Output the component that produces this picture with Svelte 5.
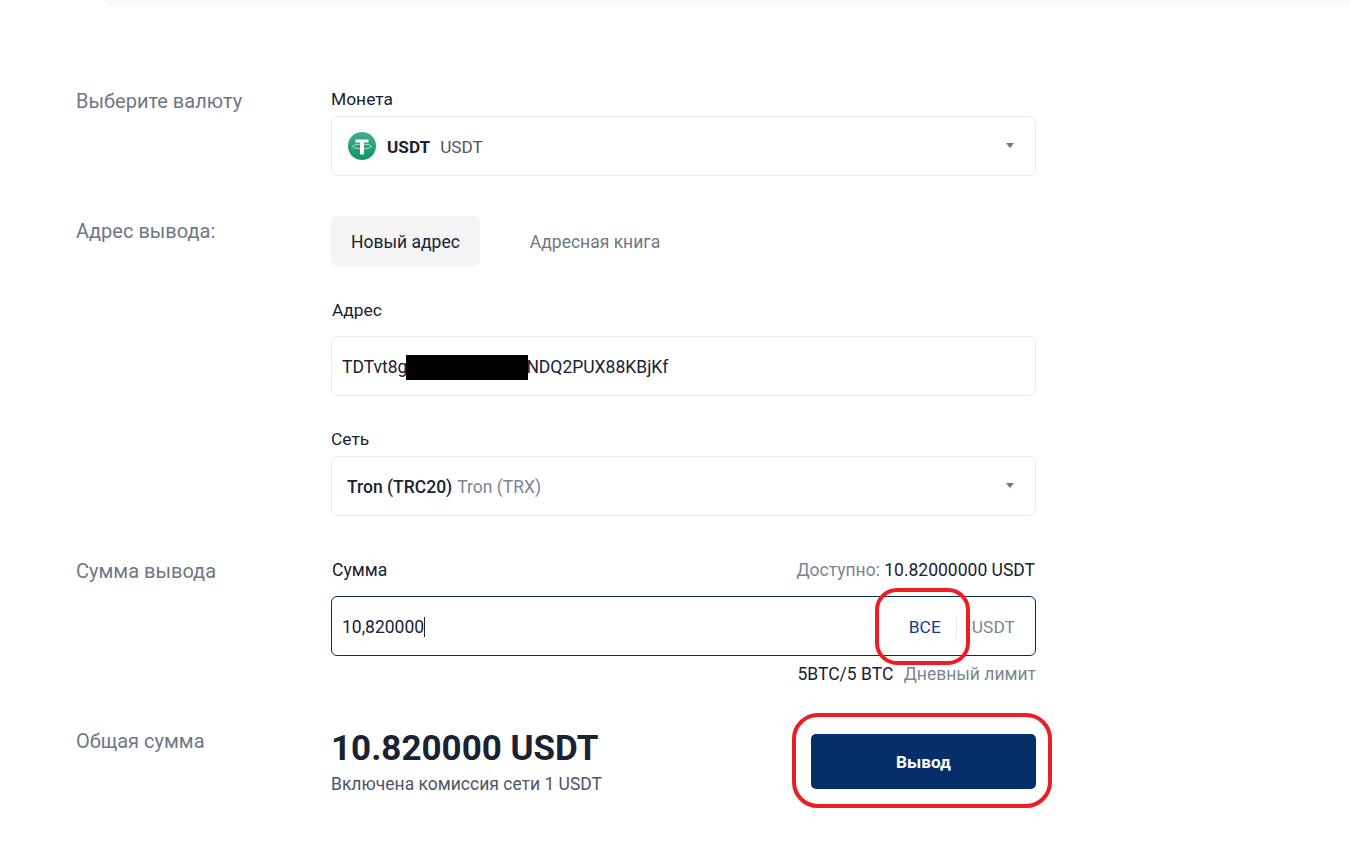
<script lang="ts">
  let amount = '10,820000';
</script>

<div class="top-strip"></div>

<main class="form">
  <div class="row first">
    <div class="row-title">Выберите валюту</div>
    <div class="row-body">
      <div class="field-label">Монета</div>
      <div class="select">
        <svg class="coin" viewBox="0 0 28 28" width="28" height="28" aria-hidden="true">
          <defs>
            <linearGradient id="tether" x1="0" y1="0" x2="0" y2="1">
              <stop offset="0" stop-color="#46ad90" />
              <stop offset="1" stop-color="#119466" />
            </linearGradient>
          </defs>
          <circle cx="14" cy="14" r="14" fill="url(#tether)" />
          <rect x="7.500" y="7.500" width="13" height="3" fill="#fff" />
          <rect x="12" y="10" width="4" height="12.500" fill="#fff" />
          <ellipse cx="14" cy="14.500" rx="9.500" ry="2.300" fill="none" stroke="#fff" stroke-opacity="0.8" stroke-width="0.8" />
        </svg>
        <span class="coin-name">USDT</span>
        <span class="coin-full">USDT</span>
        <span class="caret"></span>
      </div>
    </div>
  </div>

  <div class="row tabs-row">
    <div class="row-title">Адрес вывода:</div>
    <div class="row-body">
      <div class="tabs">
        <div class="tab active">Новый адрес</div>
        <div class="tab">Адресная книга</div>
      </div>
      <div class="field-label address-label">Адрес</div>
      <div class="input address">
        TDTvt8g<span class="redact-gap"></span>NDQ2PUX88KBjKf
        <span class="redact"></span>
      </div>
      <div class="field-label network-label">Сеть</div>
      <div class="select">
        <span class="net-name">Tron (TRC20)</span>
        <span class="net-full">Tron (TRX)</span>
        <span class="caret"></span>
      </div>
    </div>
  </div>

  <div class="row amount-row">
    <div class="row-title">Сумма вывода</div>
    <div class="row-body">
      <div class="amount-head">
        <span class="sum-label">Сумма</span>
        <span class="avail"><em>Доступно:</em> 10.82000000 USDT</span>
      </div>
      <div class="input focused">
        <span>{amount}</span><span class="cursor"></span>
        <div class="suffix">
          <span class="all">ВСЕ</span>
          <span class="divider"></span>
          <span class="unit">USDT</span>
        </div>
        <span class="mark mark-all"></span>
      </div>
      <div class="limit">5BTC/5 BTC <em>Дневный лимит</em></div>
    </div>
  </div>

  <div class="row total-row">
    <div class="row-title">Общая сумма</div>
    <div class="row-body total-body">
      <div>
        <div class="total">10.820000 USDT</div>
        <div class="fee">Включена комиссия сети 1 USDT</div>
      </div>
      <div class="submit-wrap">
        <button class="submit">Вывод</button>
        <span class="mark mark-btn"></span>
      </div>
    </div>
  </div>
</main>

<style>
  :global(body) {
    background: #fff;
    font-family: Roboto, "Liberation Sans", sans-serif;
    color: #1a2233;
  }

  .top-strip {
    height: 6px;
    margin-left: 105px;
    background: #fafafa;
    border-bottom-left-radius: 8px;
  }

  .form {
    padding: 83px 0 68px 76px;
  }

  .row {
    display: grid;
    grid-template-columns: 255px 705px;
    margin-top: 40px;
  }

  .row.first {
    margin-top: 0;
  }

  .row-title {
    font-size: 20px;
    line-height: 24px;
    color: #6f7785;
  }

  .tabs-row .row-title {
    padding-top: 3px;
  }

  .amount-row .row-title,
  .total-row .row-title {
    margin-top: -1px;
  }

  .field-label {
    font-size: 17.4px;
    line-height: 20px;
    margin-bottom: 7px;
  }

  .select,
  .input {
    position: relative;
    display: flex;
    align-items: center;
    box-sizing: border-box;
    height: 60px;
    padding-top: 2px;
    border: 1px solid #eaecef;
    border-radius: 6px;
    font-size: 17.5px;
  }

  .select {
    padding-left: 15px;
  }

  .coin {
    margin: -2px 12px 0 1px;
  }

  .coin-name {
    font-size: 17.2px;
    font-weight: 700;
    margin-left: -1px;
    margin-right: 10px;
  }

  .coin-full {
    font-size: 17.2px;
    color: #4d5666;
  }

  .net-name {
    font-size: 17.5px;
    font-weight: 500;
    margin-right: 5px;
  }

  .net-full {
    font-size: 17.5px;
    color: #7b8594;
  }

  .caret {
    position: absolute;
    right: 21px;
    top: 26px;
    border-left: 4px solid transparent;
    border-right: 4px solid transparent;
    border-top: 5px solid #6f7785;
  }

  .tabs {
    display: flex;
    gap: 30px;
  }

  .tab {
    height: 50px;
    padding-top: 1px;
    box-sizing: border-box;
    display: flex;
    align-items: center;
    font-size: 17.5px;
    color: #6f7785;
    border-radius: 6px;
  }

  .tab.active {
    padding: 1px 20px 0;
    background: #f4f4f4;
    color: #1a2233;
  }

  .tab:not(.active) {
    margin-left: 20px;
  }

  .address-label {
    margin: 34px 0 16px 1px;
  }

  .network-label {
    margin-top: 33px;
  }

  .input {
    padding-left: 10px;
  }

  .address {
    white-space: pre;
  }

  .redact-gap {
    width: 119px;
  }

  .redact {
    position: absolute;
    left: 74px;
    top: 18px;
    width: 122px;
    height: 25px;
    background: #000;
  }

  .amount-row {
    margin-top: 44px;
  }

  .amount-head {
    display: flex;
    justify-content: space-between;
    font-size: 17.5px;
    line-height: 20px;
    margin-bottom: 16px;
  }

  .avail {
    margin-right: 1px;
  }

  .sum-label {
    margin-left: 1px;
  }

  em {
    font-style: normal;
    color: #7b8594;
  }

  .focused {
    border-color: #062f69;
  }

  .cursor {
    width: 1px;
    height: 20px;
    background: #1a2233;
  }

  .suffix {
    margin-left: auto;
    display: flex;
    align-items: center;
    font-size: 17.4px;
    padding-right: 20px;
  }

  .all {
    color: #123a86;
  }

  .divider {
    width: 1px;
    height: 20px;
    background: #e9ebee;
    margin: 0 15px;
  }

  .unit {
    color: #7b8594;
  }

  .limit {
    font-size: 17.5px;
    line-height: 20px;
    margin-top: 8px;
    text-align: right;
  }

  .limit em {
    margin-left: 6px;
  }

  .total-row {
    margin-top: 46px;
  }

  .total-body {
    display: flex;
    justify-content: space-between;
    align-items: flex-start;
  }

  .total {
    font-size: 35px;
    font-weight: 700;
    line-height: 38px;
  }

  .fee {
    font-size: 17.5px;
    line-height: 20px;
    margin-top: 6px;
    color: #4d5666;
  }

  .submit-wrap {
    position: relative;
    margin-top: 4px;
  }

  .submit {
    display: block;
    width: 225px;
    height: 55px;
    border: 0;
    border-radius: 5px;
    background: #062f69;
    color: #fff;
    font-family: inherit;
    font-size: 17.2px;
    font-weight: 700;
  }

  /* red annotations drawn on top of the screenshot */
  .mark {
    position: absolute;
    box-sizing: border-box;
    border: 4px solid #ee1c25;
    pointer-events: none;
  }

  .mark-all {
    left: 543px;
    top: -9px;
    width: 95px;
    height: 77px;
    border-radius: 22px;
  }

  .mark-btn {
    left: -19px;
    top: -21px;
    width: 260px;
    height: 95px;
    border-radius: 26px;
  }
</style>
